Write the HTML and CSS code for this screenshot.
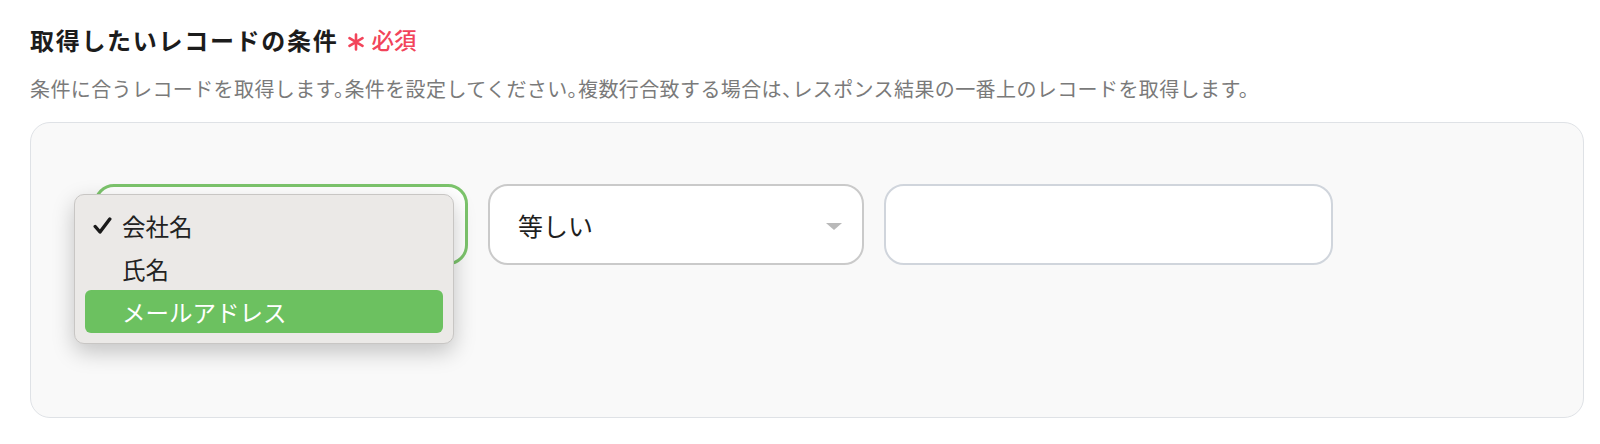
FILE: index.html
```html
<!DOCTYPE html>
<html lang="ja">
<head>
<meta charset="utf-8">
<link rel="stylesheet" href="styles.css">
</head>
<body>
<div class="field">
  <div class="label-row">
    <span class="label">取得したいレコードの条件</span>
    <span class="req-star"><svg width="16" height="18" viewBox="0 0 16 18"><path d="M8 1.5 V16.5 M1.5 5.2 L14.5 12.8 M14.5 5.2 L1.5 12.8" stroke="#f2445a" stroke-width="2.6" stroke-linecap="round"/></svg></span>
    <span class="req">必須</span>
  </div>
  <p class="desc">条件に合うレコードを取得します。条件を設定してください。複数行合致する場合は、レスポンス結果の一番上のレコードを取得します。</p>
  <div class="panel">
    <div class="cond-row">
      <div class="select select-active">
        <div class="menu">
          <div class="menu-item">
            <span class="check"><svg width="19" height="17" viewBox="0 0 19 17"><path d="M2.2 9.5 L7 15 L16.8 2" fill="none" stroke="#1a1a1a" stroke-width="3.4" stroke-linecap="round" stroke-linejoin="round"/></svg></span>
            <span>会社名</span>
          </div>
          <div class="menu-item">
            <span class="check"></span>
            <span>氏名</span>
          </div>
          <div class="menu-item menu-item-hl">
            <span class="check"></span>
            <span>メールアドレス</span>
          </div>
        </div>
      </div>
      <div class="select select-op">
        <span class="select-text">等しい</span>
        <span class="caret"></span>
      </div>
      <div class="textbox"></div>
    </div>
  </div>
</div>
</body>
</html>
```
FILE: styles.css
```css
html, body {
  margin: 0;
  padding: 0;
  background: #ffffff;
}
body {
  font-family: "Noto Sans CJK JP", "Noto Sans", sans-serif;
  color: #1f1f1f;
}
.field {
  padding: 22px 16px 0 30px;
}
.label-row {
  display: flex;
  align-items: center;
  height: 34px;
}
.label {
  font-size: 24px;
  font-weight: 700;
  letter-spacing: 1.7px;
  color: #1c1c1c;
}
.req-star {
  margin-left: 10px;
  display: flex;
  align-items: center;
  position: relative;
  top: 3px;
}
.req {
  margin-left: 7px;
  font-size: 22.5px;
  font-weight: 500;
  color: #f2445a;
}
.desc {
  margin: 19px 0 0 0;
  font-size: 20px;
  letter-spacing: 0.4px;
  line-height: 28px;
  color: #7a7a7a;
  font-feature-settings: "halt";
}
.panel {
  margin-top: 19px;
  height: 296px;
  box-sizing: border-box;
  border: 1px solid #dfe2e6;
  border-radius: 20px;
  background: #f9f9f9;
  padding: 61px 0 0 63px;
}
.cond-row {
  display: flex;
  gap: 20px;
  position: relative;
}
.select {
  position: relative;
  box-sizing: border-box;
  height: 81px;
  border-radius: 20px;
  background: #ffffff;
}
.select-active {
  width: 374px;
  border: 3px solid #7cc46c;
}
.select-op {
  width: 376px;
  border: 2px solid #cacaca;
  display: flex;
  align-items: center;
  justify-content: space-between;
  padding: 0 20px 0 28px;
}
.select-text {
  font-size: 25px;
  color: #1f1f1f;
}
.caret {
  width: 0;
  height: 0;
  border-left: 8px solid transparent;
  border-right: 8px solid transparent;
  border-top: 7px solid #b9b9b9;
  margin-top: 4px;
}
.textbox {
  width: 449px;
  height: 81px;
  box-sizing: border-box;
  border: 2px solid #d0d5dc;
  border-radius: 20px;
  background: #ffffff;
}
.menu {
  position: absolute;
  left: -23px;
  top: 7px;
  width: 380px;
  box-sizing: border-box;
  padding: 9px 10px 10px 10px;
  background: #ebe9e7;
  border: 1px solid #c8c6c4;
  border-radius: 10px;
  box-shadow: 0 8px 22px rgba(0, 0, 0, 0.22);
  z-index: 2;
}
.menu-item {
  display: flex;
  align-items: center;
  height: 43px;
  border-radius: 6px;
  font-size: 23.5px;
  color: #222222;
  padding-left: 8px;
}
.check {
  width: 29px;
  display: flex;
  align-items: center;
}
.menu-item-hl {
  background: #6cc160;
  color: #ffffff;
}
```
